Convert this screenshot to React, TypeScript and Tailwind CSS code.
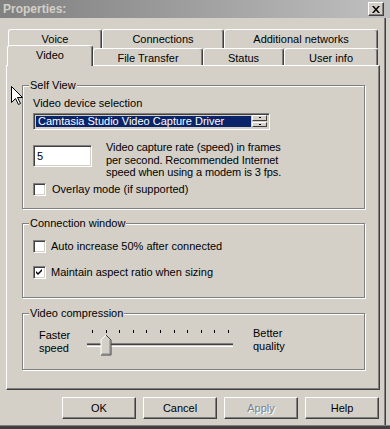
import React from "react";

const raised =
  "border border-t-white border-l-white border-r-[#404040] border-b-[#404040] shadow-[inset_-1px_-1px_0_#808080]";
const sunken =
  "border border-t-[#808080] border-l-[#808080] border-r-white border-b-white shadow-[inset_1px_1px_0_#404040,inset_-1px_-1px_0_#d4d0c8]";
const group =
  "border border-[#808080] shadow-[1px_1px_0_#fff,inset_1px_1px_0_#fff]";

function Checkbox({ checked }: { checked?: boolean }) {
  return (
    <div className={`w-[13px] h-[13px] bg-white ${sunken} flex items-center justify-center`}>
      {checked && (
        <svg width="7" height="7" viewBox="0 0 7 7">
          <path d="M0 2 L2 4 L6 0 L6 2 L2 6 L0 4 Z" fill="#000" />
        </svg>
      )}
    </div>
  );
}

function GroupTitle({ children }: { children: React.ReactNode }) {
  return (
    <div className="-mt-[7px] ml-[6px] px-[1px] w-fit bg-[#d4d0c8] h-[13px]">{children}</div>
  );
}

function Tab({ label, w, selected, h }: { label: string; w: number; selected?: boolean; h: number }) {
  return (
    <div
      style={{ width: w, height: h }}
      className={`flex items-start justify-center pt-[3px] border-l border-t border-l-white border-t-white border-r border-r-[#404040] shadow-[inset_-1px_0_0_#808080] rounded-t-[3px] bg-[#d4d0c8] ${
        selected ? "relative z-10 -mb-[1px]" : ""
      }`}
    >
      {label}
    </div>
  );
}

function Btn({ label, disabled }: { label: string; disabled?: boolean }) {
  return (
    <div className={`w-[74px] h-[22px] ${raised} flex items-center justify-center`}>
      <span className={disabled ? "text-[#808080] [text-shadow:1px_1px_0_#fff]" : ""}>{label}</span>
    </div>
  );
}

export default function App() {
  const ticks = Array.from({ length: 11 }, (_, i) => Math.round(5 + i * 13.6));
  return (
    <div className="w-[390px] h-[429px] bg-[#d4d0c8] relative overflow-hidden flex flex-col text-[11px] leading-[13px] text-black font-['Liberation_Sans',Arial,sans-serif]">
      {/* Title bar */}
      <div className="h-[18px] shrink-0 bg-gradient-to-r from-[#808080] to-[#c0c0c0] flex items-center justify-between pl-[3px] pr-[6px]">
        <span className="font-bold text-[12px] text-[#d4d0c8]">Properties:</span>
        <div className={`w-[16px] h-[14px] bg-[#d4d0c8] ${raised} flex items-center justify-center`}>
          <svg width="8" height="7" viewBox="0 0 8 7">
            <path d="M0 0h2l2 2.5L6 0h2L5 3.5 8 7H6L4 4.5 2 7H0l3-3.5Z" fill="#000" />
          </svg>
        </div>
      </div>

      <div className="flex h-[407px] shrink-0">
        <div className="w-[384px]">
          {/* Tabs */}
          <div className="pt-[11px]">
            <div className="flex ml-[8px] h-[19px]">
              <Tab label="Voice" w={94} h={19} />
              <Tab label="Connections" w={122} h={19} />
              <Tab label="Additional networks" w={154} h={19} />
            </div>
            <div className="flex items-end ml-[7px] h-[17px]">
              <Tab label="Video" w={86} h={21} selected />
              <Tab label="File Transfer" w={110} h={17} />
              <Tab label="Status" w={81} h={17} />
              <Tab label="User info" w={94} h={17} />
            </div>
          </div>

          {/* Panel */}
          <div className="ml-[6px] w-[374px] h-[325px] border border-t-white border-l-white border-r-[#404040] border-b-[#404040] shadow-[inset_-1px_-1px_0_#808080] pl-[15px] pt-[19px]">
            {/* Self View */}
            <div className={`w-[343px] h-[124px] ${group}`}>
              <GroupTitle>Self View</GroupTitle>
              <div className="pl-[10px]">
                <div className="mt-[5px]">Video device selection</div>
                <div className={`mt-[3px] w-[237px] h-[17px] ${sunken} p-[2px] flex`}>
                  <div className="flex-1 bg-[#0a246a] text-white pl-[2px] flex items-center">
                    Camtasia Studio Video Capture Driver
                  </div>
                  <div className="flex flex-col gap-[1px] w-[15px] ml-[1px] -mt-[1px]">
                    <div className="h-[6px] border border-t-white border-l-white border-r-[#404040] border-b-[#404040] bg-[#d4d0c8] flex items-center justify-center">
                      <div className="w-[2px] h-[1px] bg-black" />
                    </div>
                    <div className="h-[6px] border border-t-white border-l-white border-r-[#404040] border-b-[#404040] bg-[#d4d0c8] flex items-center justify-center">
                      <div className="w-[2px] h-[1px] bg-black" />
                    </div>
                  </div>
                </div>
                <div className="mt-[11px] flex items-start">
                  <div className={`mt-[4px] w-[59px] h-[22px] bg-white ${sunken} pl-[3px] flex items-center`}>5</div>
                  <div className="ml-[14px] leading-[12.5px] tracking-[-0.1px]">
                    Video capture rate (speed) in frames
                    <br />
                    per second. Recommended Internet
                    <br />
                    speed when using a modem is 3 fps.
                  </div>
                </div>
                <div className="mt-[4px] flex items-center gap-[6px] h-[13px]">
                  <Checkbox />
                  <span>Overlay mode (if supported)</span>
                </div>
              </div>
            </div>

            {/* Connection window */}
            <div className={`mt-[14px] w-[343px] h-[75px] ${group}`}>
              <GroupTitle>Connection window</GroupTitle>
              <div className="pl-[10px]">
                <div className="mt-[10px] flex items-center gap-[5px] h-[13px]">
                  <Checkbox />
                  <span>Auto increase 50% after connected</span>
                </div>
                <div className="mt-[13px] flex items-center gap-[5px] h-[13px]">
                  <Checkbox checked />
                  <span>Maintain aspect ratio when sizing</span>
                </div>
              </div>
            </div>

            {/* Video compression */}
            <div className={`mt-[15px] w-[343px] h-[57px] ${group}`}>
              <GroupTitle>Video compression</GroupTitle>
              <div className="pl-[16px] mt-[9px] flex items-start">
                <div className="w-[48px]">
                  Faster
                  <br />
                  speed
                </div>
                <svg width="146" height="27" viewBox="0 0 146 27">
                  {ticks.map((x) => (
                    <rect key={x} x={x} y={1} width={1} height={3} fill="#000" />
                  ))}
                  <rect x="0" y="14" width="146" height="1" fill="#808080" />
                  <rect x="0" y="15" width="146" height="1" fill="#404040" />
                  <rect x="0" y="16" width="146" height="1" fill="#d4d0c8" />
                  <rect x="0" y="17" width="146" height="1" fill="#fff" />
                  <polygon points="19,6 24,11 24,26 14,26 14,11" fill="#d4d0c8" />
                  <polyline points="14,26 14,11 19,6" fill="none" stroke="#fff" strokeWidth="1" />
                  <polyline points="19,6 24,11 24,26 14,26" fill="none" stroke="#404040" strokeWidth="1" />
                  <polyline points="23,11 23,25 15,25" fill="none" stroke="#808080" strokeWidth="1" />
                </svg>
                <div className="ml-[20px] -mt-[2px]">
                  Better
                  <br />
                  quality
                </div>
              </div>
            </div>
          </div>

          {/* Buttons */}
          <div className="mt-[7px] flex justify-end gap-[7px] pr-[5px]">
            <Btn label="OK" />
            <Btn label="Cancel" />
            <Btn label="Apply" disabled />
            <Btn label="Help" />
          </div>
        </div>
        {/* right window frame */}
        <div className="w-[2px] border-l border-l-[#808080] border-r border-r-[#404040]" />
      </div>
      {/* bottom window frame */}
      <div className="h-[4px] shrink-0 border-t border-t-[#808080] bg-[#404040]" />

      {/* Mouse cursor */}
      <svg className="absolute left-[11px] top-[86px]" width="13" height="20" viewBox="0 0 13 20">
        <path d="M0.5 0.5 V16.5 L4.5 12.5 L7.5 18.5 L9.5 17.5 L6.5 11.5 H11.5 Z" fill="#fff" stroke="#000" strokeWidth="1" />
      </svg>
    </div>
  );
}
